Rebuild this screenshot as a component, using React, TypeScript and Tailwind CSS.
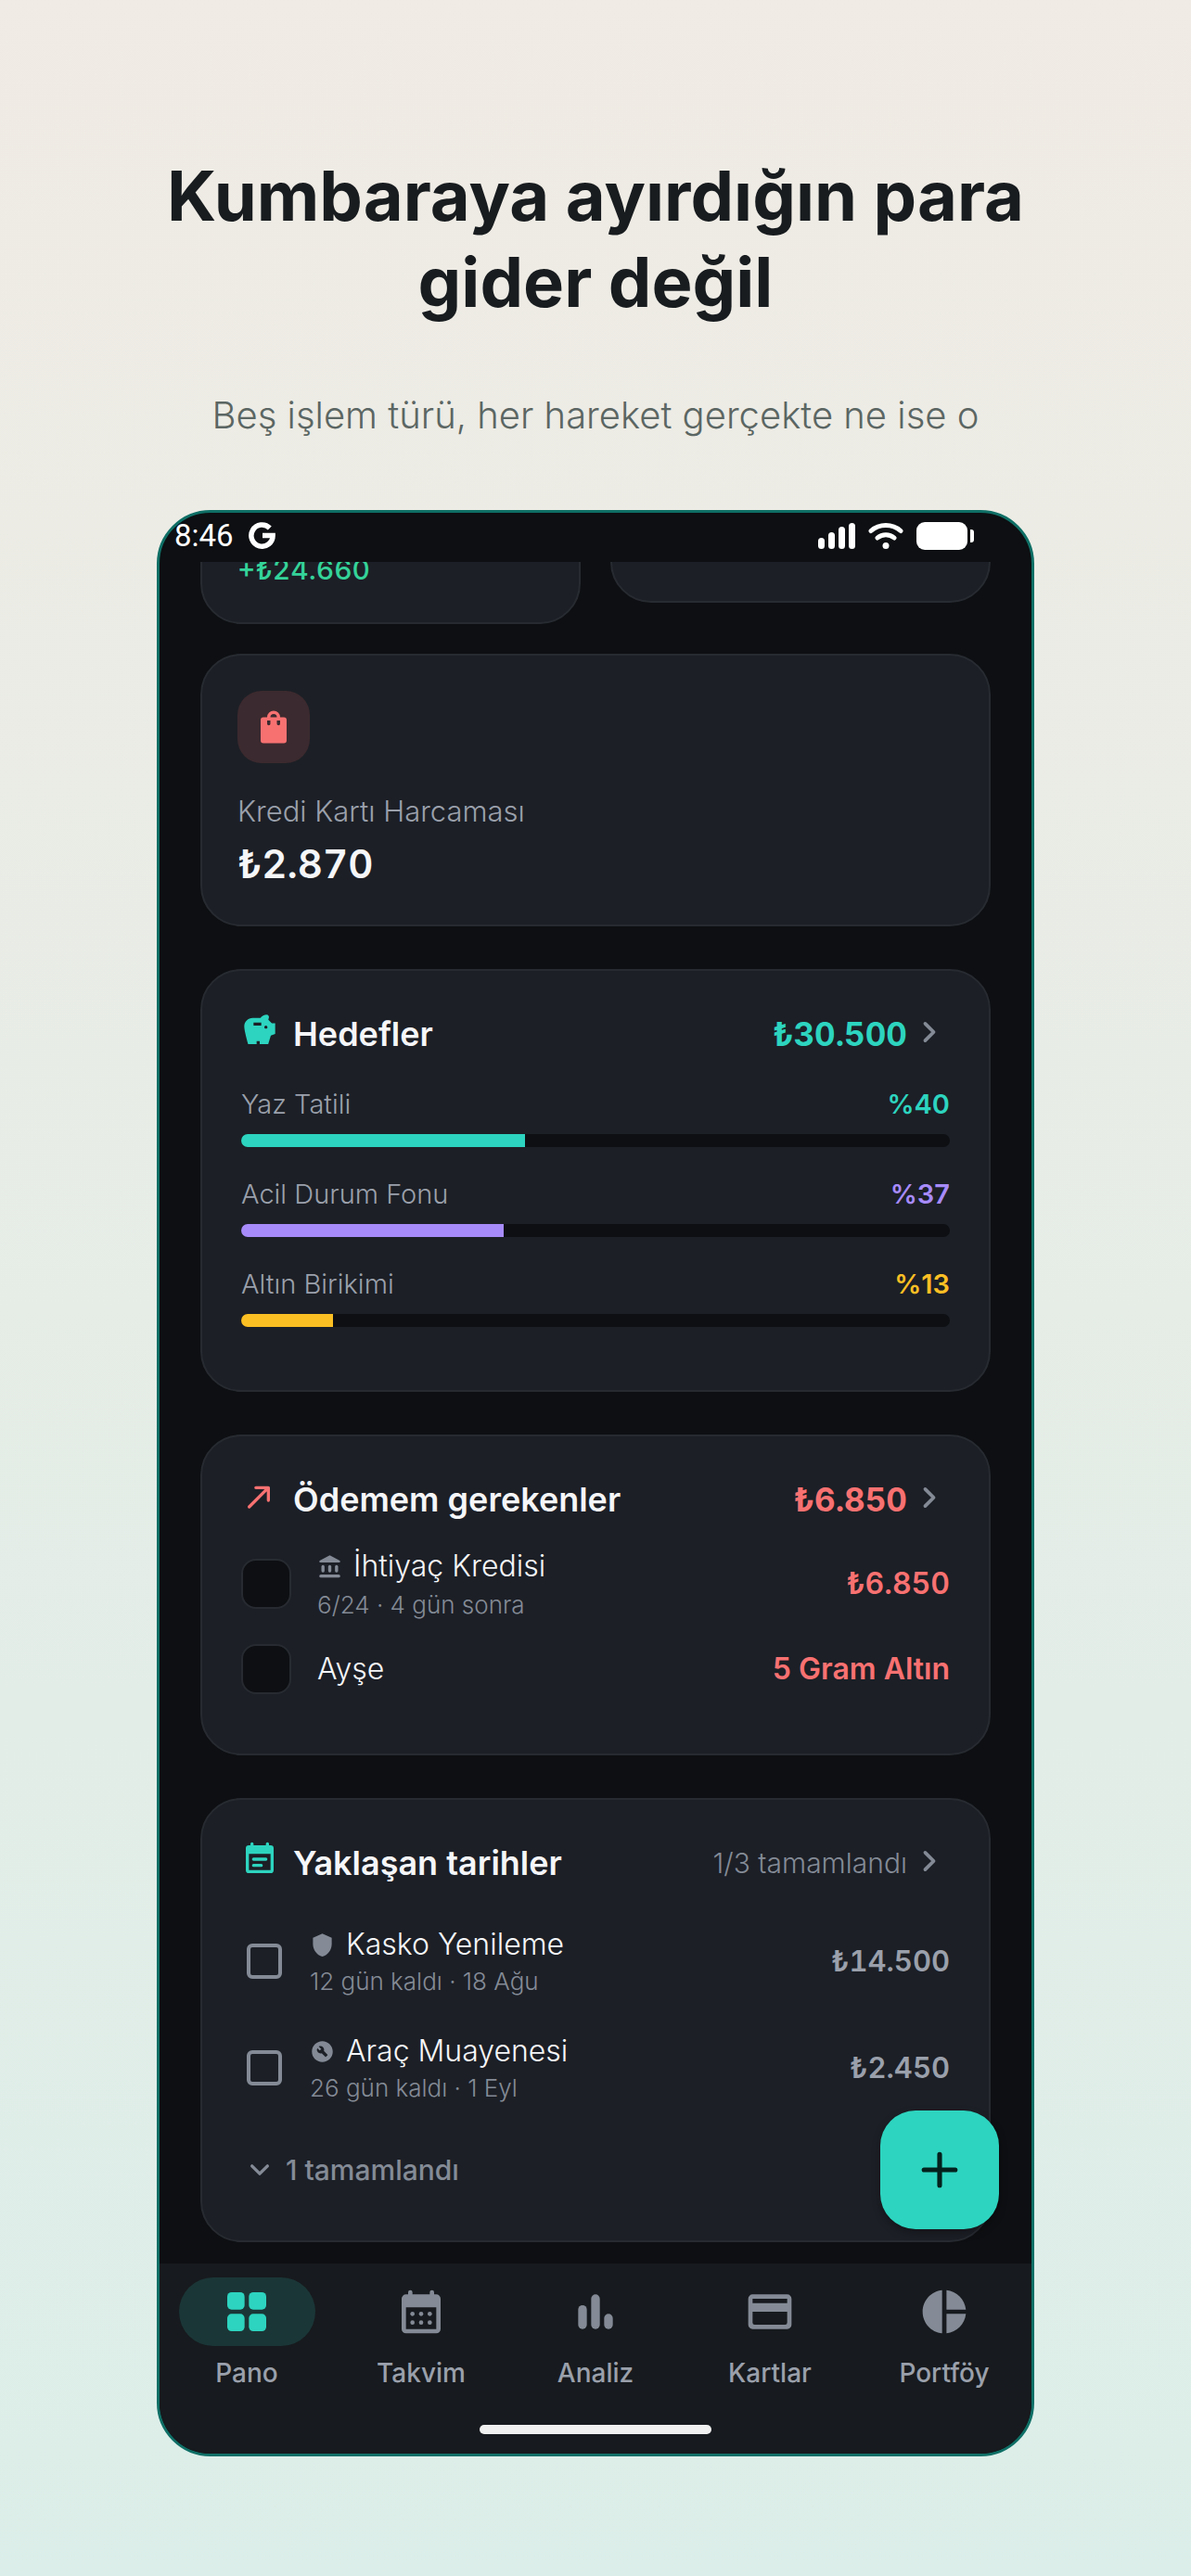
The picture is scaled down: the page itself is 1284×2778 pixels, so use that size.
import type { ReactNode } from "react";
import { MdBuildCircle, MdPieChart, MdSavings, MdShield } from "react-icons/md";

interface IconProps { className?: string; children?: ReactNode; }

function Icon({ className, children }: IconProps) {
  return (
    <svg viewBox="0 0 24 24" fill="currentColor" aria-hidden="true" className={`shrink-0 ${className ?? ""}`}>
      {children}
    </svg>
  );
}

const BagIcon = ({ className }: IconProps) => (
  <Icon className={className}>
    <path fillRule="evenodd" d="M8 6a4 4 0 0 1 8 0h2.300a1.700 1.700 0 0 1 1.700 1.700V20.300a1.700 1.700 0 0 1-1.700 1.700H5.700A1.700 1.700 0 0 1 4 20.300V7.700A1.700 1.700 0 0 1 5.700 6zm2 0h4a2 2 0 0 0-4 0zM8 8v2a1 1 0 0 0 2 0V8zm6 0v2a1 1 0 0 0 2 0V8z" />
  </Icon>
);

const BankIcon = ({ className }: IconProps) => (
  <Icon className={className}>
    <path d="M12 1.200 21.200 6c.5.300.8.700.8 1.200 0 .5-.4.800-.9.800H2.900C2.400 8 2 7.700 2 7.200c0-.5.300-.9.800-1.200z" />
    <rect x="4" y="10.500" width="3" height="7" rx="1.500" />
    <rect x="10.500" y="10.500" width="3" height="7" rx="1.500" />
    <rect x="17" y="10.500" width="3" height="7" rx="1.500" />
    <rect x="2" y="19.500" width="20" height="3" rx="1.400" />
  </Icon>
);

const ArrowIcon = ({ className }: IconProps) => (
  <Icon className={className}>
    <path d="M5.200 19.200 17.400 7M9.500 6.800H17.600V15" fill="none" stroke="currentColor" strokeWidth="2" strokeLinecap="round" strokeLinejoin="round" />
  </Icon>
);

const NoteIcon = ({ className }: IconProps) => (
  <Icon className={className}>
    <path fillRule="evenodd" d="M6 2a1 1 0 0 1 2 0v1h8V2a1 1 0 0 1 2 0v1h1a2 2 0 0 1 2 2v14a2 2 0 0 1-2 2H5a2 2 0 0 1-2-2V5a2 2 0 0 1 2-2h1zM5 8.500V19h14V8.500z" />
    <path d="M8 12h8M8 16h5" fill="none" stroke="currentColor" strokeWidth="2" strokeLinecap="round" />
  </Icon>
);

const ChevronIcon = ({ className }: IconProps) => (
  <Icon className={className}>
    <path d="m9.500 7 5 5-5 5" fill="none" stroke="currentColor" strokeWidth="2" strokeLinecap="round" strokeLinejoin="round" />
  </Icon>
);

const GridIcon = ({ className }: IconProps) => (
  <Icon className={className}>
    <rect x="3" y="3" width="8" height="8" rx="2" />
    <rect x="13" y="3" width="8" height="8" rx="2" />
    <rect x="3" y="13" width="8" height="8" rx="2" />
    <rect x="13" y="13" width="8" height="8" rx="2" />
  </Icon>
);

const CalendarIcon = ({ className }: IconProps) => (
  <Icon className={className}>
    <path fillRule="evenodd" d="M6 3a1 1 0 0 1 2 0v1h8V3a1 1 0 0 1 2 0v1h1a2 2 0 0 1 2 2v14a2 2 0 0 1-2 2H5a2 2 0 0 1-2-2V6a2 2 0 0 1 2-2h1zM5 10v10h14V10z" />
    {[13, 17].map((y) => [8, 12, 16].map((x) => <circle key={`${x}-${y}`} cx={x} cy={y} r="1" />))}
  </Icon>
);

const BarsIcon = ({ className }: IconProps) => (
  <Icon className={className}>
    <rect x="4" y="9" width="4" height="11" rx="2" />
    <rect x="10" y="4" width="4" height="16" rx="2" />
    <rect x="16" y="13" width="4" height="7" rx="2" />
  </Icon>
);

const CardIcon = ({ className }: IconProps) => (
  <Icon className={className}>
    <path fillRule="evenodd" d="M4 4h16a2 2 0 0 1 2 2v12a2 2 0 0 1-2 2H4a2 2 0 0 1-2-2V6a2 2 0 0 1 2-2zm0 2v2h16V6zm0 6v5a1 1 0 0 0 1 1h14a1 1 0 0 0 1-1v-5z" />
  </Icon>
);

const goals = [
  { name: "Yaz Tatili", pct: 40, text: "text-[#2dd4bf]", bar: "bg-[#2dd4bf]" },
  { name: "Acil Durum Fonu", pct: 37, text: "text-[#a78bfa]", bar: "bg-[#a78bfa]" },
  { name: "Altın Birikimi", pct: 13, text: "text-[#fbbf24]", bar: "bg-[#fbbf24]" },
];

const dates = [
  { id: "kasko", name: "Kasko Yenileme", note: "12 gün kaldı · 18 Ağu", amount: "₺14.500", icon: MdShield },
  { id: "arac", name: "Araç Muayenesi", note: "26 gün kaldı · 1 Eyl", amount: "₺2.450", icon: MdBuildCircle },
];

const tabs = [
  { name: "Pano", icon: GridIcon, active: true },
  { name: "Takvim", icon: CalendarIcon },
  { name: "Analiz", icon: BarsIcon },
  { name: "Kartlar", icon: CardIcon },
  { name: "Portföy", icon: MdPieChart },
];

interface SectionHeaderProps { icon: ReactNode; title: string; value: string; valueClass: string; }

function SectionHeader({ icon, title, value, valueClass }: SectionHeaderProps) {
  return (
    <div className="flex h-14 items-center justify-between">
      <div className="flex items-center gap-4">
        <span className="pb-2">{icon}</span>
        <h2 className="text-[36px] font-semibold text-[#f5f6f8]">{title}</h2>
      </div>
      <button type="button" className="flex items-center gap-0.5">
        <span className={valueClass}>{value}</span>
        <ChevronIcon className="mb-1 size-11 text-[#848b96]" />
      </button>
    </div>
  );
}

function StatusBar() {
  return (
    <div className="flex h-[53px] items-center justify-between pb-1 pl-4 pr-[62px] text-white">
      <div className="flex items-center gap-4">
        <span className="font-[Roboto,sans-serif] text-[33px] leading-10">8:46</span>
        <svg viewBox="0 0 29 29" className="size-[29px]" fill="none" stroke="currentColor" strokeWidth="5.500" aria-label="Google">
          <path d="M22.800 6.500A11.600 11.600 0 1 0 26.100 14.500H15" />
        </svg>
      </div>
      <div className="flex items-center gap-3.5">
        <svg viewBox="0 0 40 30" className="h-[30px] w-10" fill="currentColor" aria-hidden="true">
          <rect x="0" y="17" width="7" height="12" rx="3.500" />
          <rect x="11" y="11" width="7" height="18" rx="3.500" />
          <rect x="22" y="5" width="7" height="24" rx="3.500" />
          <rect x="33" y="1" width="7" height="28" rx="3.500" />
        </svg>
        <svg viewBox="0 0 38 30" className="h-[30px] w-[38px]" fill="none" stroke="currentColor" strokeWidth="5" strokeLinecap="round" aria-hidden="true">
          <path d="M3 9.500C12 1.500 26 1.500 35 9.500M10 17c5-4.500 13-4.500 18 0" />
          <circle cx="19" cy="25.500" r="3.500" fill="currentColor" stroke="none" />
        </svg>
        <svg viewBox="0 0 62 30" className="h-[30px] w-[62px]" fill="currentColor" aria-hidden="true">
          <rect x="0" y="0" width="55" height="30" rx="9" />
          <path d="M58 8h1a3 3 0 0 1 3 3v8a3 3 0 0 1-3 3h-1z" />
        </svg>
      </div>
    </div>
  );
}

export default function App() {
  return (
    <main className="min-h-screen bg-linear-to-b from-[#f0ebe4] to-[#dceee9] px-[169px] pb-[129px] pt-[165px] font-[Inter,'Noto_Sans',sans-serif]">
      <header className="text-center">
        <h1 className="text-[74px] font-bold leading-[93px] text-[#181c1f]">
          <span className="block whitespace-nowrap">Kumbaraya ayırdığın para</span>
          <span className="block">gider değil</span>
        </h1>
        <p className="-mx-10 mt-[69px] text-[40px] font-light leading-14 text-[#5b6663]">Beş işlem türü, her hareket gerçekte ne ise o</p>
      </header>

      <div className="mt-[74px] overflow-hidden rounded-[58px] border-3 border-[#0f6f66] bg-[#0d0f12]">
        <StatusBar />

        <div className="relative px-11 pb-[23px]">
          {/* Bottom edge of the cards scrolled under the status bar */}
          <div className="grid h-[67px] grid-cols-2 items-start gap-8 overflow-hidden">
            <div className="-mt-[54px] rounded-[44px] border-2 border-[#272b31] bg-[#1c1f26] px-[38px] pb-[37px] pt-10 text-[30px] font-medium leading-10 tabular-nums text-[#34d399]">
              +₺24.660
            </div>
            <div className="-mt-14 h-[100px] rounded-[44px] border-2 border-[#272b31] bg-[#1c1f26]" />
          </div>

          <section className="mt-8 rounded-[44px] border-2 border-[#272b31] bg-[#1c1f26] p-[38px]">
            <div className="flex size-[78px] items-center justify-center rounded-[26px] bg-[#3b2a2f] text-[#f87171]">
              <BagIcon className="size-[42px]" />
            </div>
            <p className="mt-[30px] text-[31px] font-light leading-11 text-[#9aa0ab]">Kredi Kartı Harcaması</p>
            <p className="mt-2 text-[42px] font-semibold leading-[54px] tabular-nums text-[#f5f6f8]">₺2.870</p>
          </section>

          <section className="mt-[46px] rounded-[44px] border-2 border-[#272b31] bg-[#1c1f26] px-[42px] pb-[68px] pt-10">
            <SectionHeader
              icon={<MdSavings className="size-10 text-[#2dd4bf]" />}
              title="Hedefler"
              value="₺30.500"
              valueClass="text-[35px] font-bold tabular-nums text-[#2dd4bf]"
            />
            <ul className="mt-7 flex flex-col gap-[31px]">
              {goals.map((g) => (
                <li key={g.name}>
                  <div className="flex items-center justify-between text-[29px] leading-10">
                    <span className="font-light text-[#9aa0ab]">{g.name}</span>
                    <span className={`font-semibold ${g.text}`}>%{g.pct}</span>
                  </div>
                  <div className="mt-3 h-3.5 overflow-hidden rounded-full bg-[#0d0f12]">
                    <div className={`h-full ${g.bar}`} style={{ width: `${g.pct}%` }} />
                  </div>
                </li>
              ))}
            </ul>
          </section>

          <section className="mt-[46px] rounded-[44px] border-2 border-[#272b31] bg-[#1c1f26] px-[42px] pb-16 pt-10">
            <SectionHeader
              icon={<ArrowIcon className="size-10 text-[#f87171]" />}
              title="Ödemem gerekenler"
              value="₺6.850"
              valueClass="text-[35px] font-bold tabular-nums text-[#f87171]"
            />
            <ul className="mt-[22px] flex flex-col gap-6">
              <li className="flex items-center">
                <input id="kredi" type="checkbox" className="size-[54px] shrink-0 appearance-none rounded-2xl border-2 border-[#272b31] bg-[#0d0f12]" />
                <label htmlFor="kredi" className="ml-7 flex-1">
                  <span className="flex items-center gap-3 text-[32px] font-light leading-11 text-[#f5f6f8]">
                    <BankIcon className="size-[27px] text-[#848b96]" />
                    İhtiyaç Kredisi
                  </span>
                  <span className="mt-0.5 block text-[26px] font-light leading-9 text-[#848b96]">6/24 · 4 gün sonra</span>
                </label>
                <span className="text-[32px] font-semibold tabular-nums text-[#f87171]">₺6.850</span>
              </li>
              <li className="flex items-center">
                <input id="ayse" type="checkbox" className="size-[54px] shrink-0 appearance-none rounded-2xl border-2 border-[#272b31] bg-[#0d0f12]" />
                <label htmlFor="ayse" className="ml-7 flex-1 text-[32px] font-light leading-11 text-[#f5f6f8]">Ayşe</label>
                <span className="text-[32px] font-semibold text-[#f87171]">5 Gram Altın</span>
              </li>
            </ul>
          </section>

          <section className="mt-[46px] rounded-[44px] border-2 border-[#272b31] bg-[#1c1f26] px-[42px] pb-14 pt-10">
            <SectionHeader
              icon={<NoteIcon className="size-10 text-[#2dd4bf]" />}
              title="Yaklaşan tarihler"
              value="1/3 tamamlandı"
              valueClass="text-[30px] font-light text-[#848b96]"
            />
            <ul className="mt-[38px] flex flex-col gap-[35px]">
              {dates.map(({ id, name, note, amount, icon: RowIcon }) => (
                <li key={id} className="flex items-center pl-1.5">
                  <input id={id} type="checkbox" className="size-[38px] shrink-0 appearance-none rounded-md border-4 border-[#848b96]" />
                  <label htmlFor={id} className="ml-[30px] flex-1">
                    <span className="flex items-center gap-3 text-[32px] font-light leading-11 text-[#f5f6f8]">
                      <RowIcon className="size-[27px] shrink-0 text-[#848b96]" />
                      {name}
                    </span>
                    <span className="block text-[26px] font-light leading-9 text-[#848b96]">{note}</span>
                  </label>
                  <span className="text-[31px] font-semibold tabular-nums text-[#9aa0ab]">{amount}</span>
                </li>
              ))}
            </ul>
            <button type="button" className="mt-[50px] flex items-center gap-2 text-[30px] font-medium leading-10 text-[#848b96]">
              <ChevronIcon className="size-10 rotate-90" />
              1 tamamlandı
            </button>
          </section>

          <button type="button" aria-label="Ekle" className="absolute bottom-[37px] right-[35px] flex size-32 items-center justify-center rounded-[38px] bg-[#2dd4bf] text-[#04211d] shadow-[0_4px_10px_rgba(0,0,0,0.3)]">
            <Icon className="size-14">
              <path d="M4.800 12h14.400M12 4.800v14.400" fill="none" stroke="currentColor" strokeWidth="2.200" strokeLinecap="round" />
            </Icon>
          </button>
        </div>

        <nav className="bg-[#171a1e] pb-[21px] pt-[15px]">
          <div className="grid grid-cols-5">
            {tabs.map(({ name, icon: TabIcon, active }) => (
              <a key={name} href={`#${name}`} className="flex flex-col items-center gap-3">
                <span className={`flex h-[74px] w-[147px] items-center justify-center rounded-full ${active ? "bg-[#1b3637] text-[#2dd4bf]" : "text-[#848b96]"}`}>
                  <TabIcon className="size-14" />
                </span>
                <span className="text-[28px] font-medium leading-[34px] text-[#9aa0ab]">{name}</span>
              </a>
            ))}
          </div>
          <div className="mx-auto mt-[39px] h-2.5 w-[250px] rounded-full bg-[#f0f0f0]" />
        </nav>
      </div>
    </main>
  );
}
